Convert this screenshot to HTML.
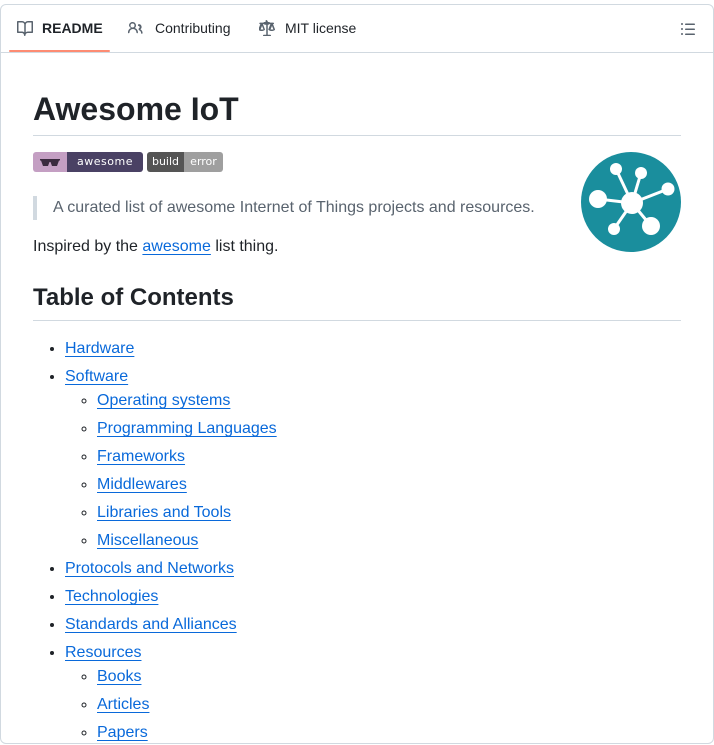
<!DOCTYPE html>
<html><head><meta charset="utf-8"><style>
*{box-sizing:border-box}
body{margin:0;width:714px;height:714px;overflow:hidden;background:#fff;font-family:"Liberation Sans",sans-serif;color:#1f2328}
.box{position:absolute;left:0;top:4px;width:714px;height:740px;border:1px solid #d1d9e0;border-radius:6px}
.tabs{height:48px;border-bottom:1px solid #d1d9e0;position:relative;font-size:14px}
.tab{position:absolute;top:-1px;height:48px;display:flex;align-items:center}
.tab svg{margin-right:9px}
.ul{position:absolute;left:8px;width:101px;top:45px;height:2px;background:#fd8c73;border-radius:1px}
.content{position:absolute;left:32px;top:48px;width:648px}
h1{font-size:32px;font-weight:600;margin:0;position:absolute;top:36px;left:0;line-height:40px}
.hr1{position:absolute;top:82px;left:0;width:648px;height:1px;background:#d1d9e0}
.badge{position:absolute;top:99px;height:20px;border-radius:3px;overflow:hidden;display:flex;font-size:11px;font-family:"DejaVu Sans",sans-serif;color:#fff}
.bq{position:absolute;top:143px;left:0;border-left:4px solid #d1d9e0;padding-left:16px;height:24px;line-height:24px;color:#59636e;font-size:16px}
p{position:absolute;top:182px;margin:0;font-size:16px;line-height:24px}
a{color:#0969da;text-decoration:underline;text-underline-offset:3px}
h2{position:absolute;top:230px;margin:0;font-size:24px;font-weight:600;line-height:30px}
.hr2{position:absolute;top:267px;left:0;width:648px;height:1px;background:#d1d9e0}
ul{margin:0;padding-left:32px;font-size:16px;line-height:24px}
.list{position:absolute;top:284px;left:0}
li+li{margin-top:4px}
ul ul{list-style:circle}
</style></head><body>
<div class="box">
<div class="tabs">
<div class="tab" style="left:16px;font-weight:700"><svg width="16" height="16" viewBox="0 0 16 16" fill="#59636e"><path d="M0 1.75A.75.75 0 0 1 .75 1h4.25c1.2 0 2.3.57 3 1.45A3.74 3.74 0 0 1 11 1h4.25a.75.75 0 0 1 .75.75v10.5a.75.75 0 0 1-.75.75h-4.5a2.25 2.25 0 0 0-2.250 2.25.75.75 0 0 1-1.5 0A2.25 2.25 0 0 0 4.750 13H.75a.75.75 0 0 1-.75-.75Zm7.25 10.5V4.25A2.25 2.25 0 0 0 5 2.5H1.5v9h3.25c.92 0 1.77.28 2.5.75Zm1.5 0c.73-.47 1.58-.75 2.5-.75h3.25v-9H11a2.25 2.25 0 0 0-2.25 2.25Z"/></svg>README</div>
<div class="tab" style="left:126px"><svg width="16" height="16" viewBox="0 0 16 16" fill="#59636e" style="margin-right:12px"><path d="M2 5.5a3.5 3.5 0 1 1 5.9 2.55 5 5 0 0 1 3.05 4.45.75.75 0 0 1-1.5.03 3.5 3.5 0 0 0-7 0 .75.75 0 0 1-1.5-.03A5 5 0 0 1 4 8.05 3.5 3.5 0 0 1 2 5.5ZM5.5 3.5a2 2 0 1 0 0 4 2 2 0 0 0 0-4Zm5.6 1.2a.75.75 0 0 1 .72-.54 2.75 2.75 0 0 1 1.53 5.05 4.5 4.5 0 0 1 2.22 3.8.75.75 0 0 1-1.5 0 3 3 0 0 0-1.970-2.820.75.75 0 0 1-.48-.7v-.56a.75.75 0 0 1 .38-.65 1.25 1.25 0 0 0-.44-2.33.75.75 0 0 1-.46-1.25Z"/></svg>Contributing</div>
<div class="tab" style="left:258px"><svg width="16" height="16" viewBox="0 0 16 16" fill="#59636e" style="margin-right:10px"><path d="M8.75.75V2h.99c.2 0 .4.05.58.14l.94.47h3a.75.75 0 0 1 0 1.5h-.28l2 5.1c.1.26.02.56-.2.73-.9.7-2 1.06-3.1 1.06s-2.2-.36-3.1-1.06a.63.63 0 0 1-.2-.73l2-5.1h-.83l-.94.47c-.18.09-.38.14-.58.14H8.75v10h2.5a.75.75 0 0 1 0 1.5h-6.5a.75.75 0 0 1 0-1.5h2.5v-10h-.99c-.2 0-.4-.05-.58-.14l-.94-.47h-.83l2 5.1c.1.26.02.56-.2.73-.9.7-2 1.06-3.100 1.06S.44 10.7-.46 10c-.2-.17-.3-.47-.2-.73l2-5.1h-.28a.75.75 0 0 1 0-1.5h3l.94-.47c.18-.09.38-.14.58-.14h.99V.75a.75.75 0 0 1 1.5 0ZM11.5 9.5h2.9L13 5.9Zm-9.9 0h2.9L3 5.9Z"/></svg>MIT license</div>
<svg style="position:absolute;left:679px;top:16px" width="16" height="16" viewBox="0 0 16 16" fill="#59636e"><path d="M5.75 2.5h8.5a.75.75 0 0 1 0 1.5h-8.5a.75.75 0 0 1 0-1.5Zm0 5h8.5a.75.75 0 0 1 0 1.5h-8.5a.75.75 0 0 1 0-1.5Zm0 5h8.5a.75.75 0 0 1 0 1.5h-8.5a.75.75 0 0 1 0-1.5ZM2 14a1 1 0 1 1 0-2 1 1 0 0 1 0 2Zm1-6a1 1 0 1 1-2 0 1 1 0 0 1 2 0ZM2 4a1 1 0 1 1 0-2 1 1 0 0 1 0 2Z"/></svg>
<div class="ul"></div>
</div>
<div class="content">
<h1>Awesome IoT</h1>
<div class="hr1"></div>
<div class="badge" style="left:0;width:110px"><span style="background:#c49fc3;width:34px;display:flex;align-items:center;justify-content:center"><svg width="22" height="10" viewBox="0 0 22 10"><path d="M1 2h20v1.5h-1L18 9h-5l-1.5-4h-1L9 9H4L2 3.5H1Z" fill="#3a2a3e"/></svg></span><span style="background:#4a4164;flex:1;text-align:center;line-height:20px;letter-spacing:.5px">awesome</span></div>
<div class="badge" style="left:114px;width:76px"><span style="background:#555;width:37px;text-align:center;line-height:20px">build</span><span style="background:#9f9f9f;flex:1;text-align:center;line-height:20px">error</span></div>
<div class="bq">A curated list of awesome Internet of Things projects and resources.</div>
<p>Inspired by the <a>awesome</a> list thing.</p>
<h2>Table of Contents</h2>
<div class="hr2"></div>
<div class="list"><ul>
<li><a>Hardware</a></li>
<li><a>Software</a><ul>
<li><a>Operating systems</a></li>
<li><a>Programming Languages</a></li>
<li><a>Frameworks</a></li>
<li><a>Middlewares</a></li>
<li><a>Libraries and Tools</a></li>
<li><a>Miscellaneous</a></li></ul></li>
<li><a>Protocols and Networks</a></li>
<li><a>Technologies</a></li>
<li><a>Standards and Alliances</a></li>
<li><a>Resources</a><ul>
<li><a>Books</a></li>
<li><a>Articles</a></li>
<li><a>Papers</a></li></ul></li>
</ul></div>
</div>
<svg style="position:absolute;left:579px;top:146px" width="102" height="102" viewBox="580 151 102 102">
<circle cx="631" cy="202" r="50" fill="#1a8e9d"/>
<g stroke="#fff" stroke-width="3">
<line x1="632" y1="203" x2="616" y2="169"/><line x1="632" y1="203" x2="641" y2="173"/><line x1="632" y1="203" x2="668" y2="189"/><line x1="632" y1="203" x2="598" y2="199"/><line x1="632" y1="203" x2="614" y2="229"/><line x1="632" y1="203" x2="651" y2="226"/></g>
<g fill="#fff"><circle cx="632" cy="203" r="11"/><circle cx="616" cy="169" r="6"/><circle cx="641" cy="173" r="6"/><circle cx="668" cy="189" r="6.5"/><circle cx="598" cy="199" r="9"/><circle cx="614" cy="229" r="6"/><circle cx="651" cy="226" r="9"/></g>
</svg>
</div>
</body></html>
